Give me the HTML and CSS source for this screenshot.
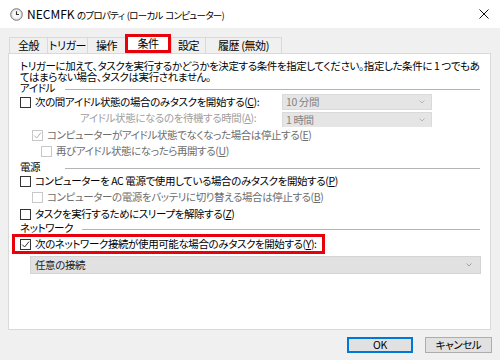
FILE: index.html
```html
<!DOCTYPE html>
<html lang="ja">
<head>
<meta charset="utf-8">
<link rel="stylesheet" href="styles.css">
</head>
<body>
<div class="titlebar">
  <svg class="app-icon" viewBox="0 0 13 13">
    <circle cx="6.5" cy="6.5" r="5.8" fill="#dcdcdc" stroke="#7a7a7a" stroke-width="1"/>
    <circle cx="6.5" cy="6.5" r="4.3" fill="#f7f7f7"/>
    <path d="M6.5 3.2 V6.5 H9" fill="none" stroke="#333" stroke-width="1.1"/>
  </svg>
  <span class="title"><span class="title-latin">NECMFK</span> のプロパティ (ローカル コンピューター)</span>
  <svg class="close" viewBox="0 0 10 10"><path d="M0.5 0.5 L9.5 9.5 M9.5 0.5 L0.5 9.5" stroke="#111" stroke-width="1" fill="none"/></svg>
</div>
<div class="main">
  <div class="tabs">
    <div class="tab t1">全般</div>
    <div class="tab t2">トリガー</div>
    <div class="tab t3">操作</div>
    <div class="tab t4 active">条件</div>
    <div class="tab t5">設定</div>
    <div class="tab t6">履歴 (無効)</div>
  </div>
  <div class="panel">
    <p class="desc">トリガーに加えて、タスクを実行するかどうかを決定する条件を指定してください。指定した条件に 1 つでもあ<br>てはまらない場合、タスクは実行されません。</p>
    <div class="grp g-idle"><span class="grp-label">アイドル</span><span class="grp-line"></span></div>
    <div class="row r-c">
      <div class="cell">
        <span class="cb"></span><span>次の間アイドル状態の場合のみタスクを開始する(<u>C</u>):</span>
      </div>
      <div class="combo dis"><span>10 分間</span><svg class="chev" viewBox="0 0 6 4"><path d="M0.5 0.5 L3 3 L5.5 0.5" fill="none" stroke="#b5b5b5"/></svg></div>
    </div>
    <div class="row r-a">
      <div class="cell"><span class="gray2 lbl-a">アイドル状態になるのを待機する時間(<u>A</u>):</span></div>
      <div class="combo dis clip"><span>1 時間</span><svg class="chev" viewBox="0 0 6 4"><path d="M0.5 0.5 L3 3 L5.5 0.5" fill="none" stroke="#b5b5b5"/></svg></div>
    </div>
    <div class="row r-e ind1">
      <span class="cb dis"><svg viewBox="0 0 9 9"><path d="M1.2 4.6 L3.6 7 L8 1.6" fill="none" stroke="#b0b0b0" stroke-width="1"/></svg></span><span class="gray">コンピューターがアイドル状態でなくなった場合は停止する(<u>E</u>)</span>
    </div>
    <div class="row r-u ind2">
      <span class="cb dis"></span><span class="gray">再びアイドル状態になったら再開する(<u>U</u>)</span>
    </div>
    <div class="grp g-power"><span class="grp-label">電源</span><span class="grp-line"></span></div>
    <div class="row r-p">
      <span class="cb"></span><span>コンピューターを AC 電源で使用している場合のみタスクを開始する(<u>P</u>)</span>
    </div>
    <div class="row r-b ind1">
      <span class="cb dis"></span><span class="gray">コンピューターの電源をバッテリに切り替える場合は停止する(<u>B</u>)</span>
    </div>
    <div class="row r-z">
      <span class="cb"></span><span>タスクを実行するためにスリープを解除する(<u>Z</u>)</span>
    </div>
    <div class="grp g-net"><span class="grp-label">ネットワーク</span><span class="grp-line"></span></div>
    <div class="row r-y">
      <span class="cb"><svg viewBox="0 0 9 9"><path d="M1.2 4.6 L3.6 7 L8 1.6" fill="none" stroke="#333" stroke-width="1"/></svg></span><span>次のネットワーク接続が使用可能な場合のみタスクを開始する(<u>Y</u>):</span>
    </div>
    <div class="combo net"><span>任意の接続</span><svg class="chev" viewBox="0 0 6 4"><path d="M0.5 0.5 L3 3 L5.5 0.5" fill="none" stroke="#a0a0a0"/></svg></div>
  </div>
</div>
<div class="buttons">
  <div class="btn ok">OK</div>
  <div class="btn">キャンセル</div>
</div>
</body>
</html>
```

FILE: styles.css
```css
* { box-sizing: border-box; }
html, body { margin: 0; padding: 0; }
body {
  width: 500px;
  height: 360px;
  overflow: hidden;
  background: #f0f0f0;
  font-family: "Noto Sans CJK JP", "Noto Sans", sans-serif;
  font-size: 10.5px;
  letter-spacing: -0.4px;
  color: #000;
  font-feature-settings: "palt";
}
u { text-decoration: underline; text-underline-offset: 1px; }

.titlebar {
  height: 28px;
  background: #fff;
  display: flex;
  align-items: center;
  padding-left: 10px;
}
.app-icon { width: 13px; height: 13px; flex: none; }
.title { margin-left: 4px; font-size: 9.5px; letter-spacing: -0.7px; word-spacing: 1px; line-height: 1; white-space: nowrap; }
.title-latin { font-size: 12px; letter-spacing: 0; }
.close { margin-left: auto; margin-right: 11px; width: 10px; height: 10px; }

.main { padding: 6px 9px 0 8px; }
.tabs {
  display: flex;
  align-items: flex-end;
  height: 19px;
  padding-left: 1px;
  position: relative;
  z-index: 1;
}
.tab {
  height: 16px;
  border: 1px solid #d9d9d9;
  border-bottom: none;
  margin-right: -1px;
  display: flex;
  align-items: center;
  justify-content: center;
  background: #f0f0f0;
  line-height: 1;
  white-space: nowrap;
  font-size: 11px;
}
.t1 { width: 39px; }
.t2 { width: 41px; }
.t3 { width: 39px; }
.t4 { width: 46px; }
.t5 { width: 35px; }
.t6 { width: 77px; }
.tab.active {
  height: 19px;
  background: #fff;
  border: 3px solid #e8000b;
  margin-right: 0;
  padding-bottom: 1px;
}

.panel {
  background: #fff;
  border: 1px solid #d9d9d9;
  height: 277px;
  padding: 6px 10px 0 11px;
}
.desc { margin: 0; line-height: 11px; height: 22px; white-space: nowrap; }

.grp { display: flex; align-items: center; line-height: 1; }
.grp-label { min-width: 39px; }
.grp-line { flex: 1; height: 1px; background: #b4b4b4; margin-left: 6px; margin-top: 2px; }
.g-net .grp-line { margin-left: 9px; }
.g-idle { height: 12px; }
.g-power { height: 14px; }
.g-net { height: 11px; }

.row { display: flex; align-items: center; line-height: 1; white-space: nowrap; }
.cell { flex: 0 0 262px; display: flex; align-items: center; }
.r-c { height: 16px; }
.r-a { height: 17px; align-items: flex-end; }
.r-a .cell { align-self: center; }
.r-e { height: 16px; }
.r-u { height: 17px; }
.r-p { height: 15px; }
.r-b { height: 17px; }
.r-z { height: 17px; }
.ind1 { padding-left: 12px; }
.ind2 { padding-left: 21px; }
.lbl-a { padding-left: 60px; }
.gray { color: #6d6d6d; }
.gray2 { color: #a0a0a0; }

.cb {
  width: 11px;
  height: 11px;
  border: 1px solid #333;
  background: #fff;
  flex: none;
  margin-right: 4px;
  display: flex;
  align-items: center;
  justify-content: center;
}
.cb.dis { border-color: #c8c8c8; }
.cb svg { width: 9px; height: 9px; }

.combo {
  display: flex;
  align-items: center;
  background: #e5e5e5;
  border: 1px solid #dadada;
  padding: 0 6px 0 3px;
  line-height: 1;
}
.combo.dis { width: 150px; height: 16px; color: #838383; }
.combo.clip { height: 15px; border-bottom: none; }
.chev { width: 6px; height: 4px; margin-left: auto; }

.r-y {
  height: 20px;
  width: 313px;
  margin-left: -8px;
  border: 3px solid #e8000b;
  padding-left: 5px;
}
.combo.net {
  margin-top: 2px;
  margin-left: 10px;
  width: 451px;
  height: 18px;
  background: #e1e1e1;
  border-color: #d4d4d4;
  color: #222;
  padding-left: 4px;
  padding-right: 8px;
}

.buttons {
  display: flex;
  justify-content: flex-end;
  gap: 12px;
  padding: 7px 8px 0 0;
}
.btn {
  width: 67px;
  height: 16px;
  border: 1px solid #adadad;
  background: #e1e1e1;
  display: flex;
  align-items: center;
  justify-content: center;
  line-height: 1;
}
.btn.ok { width: 66px; border-color: #0078d7; box-shadow: inset 0 0 0 1px #0078d7; }
```
